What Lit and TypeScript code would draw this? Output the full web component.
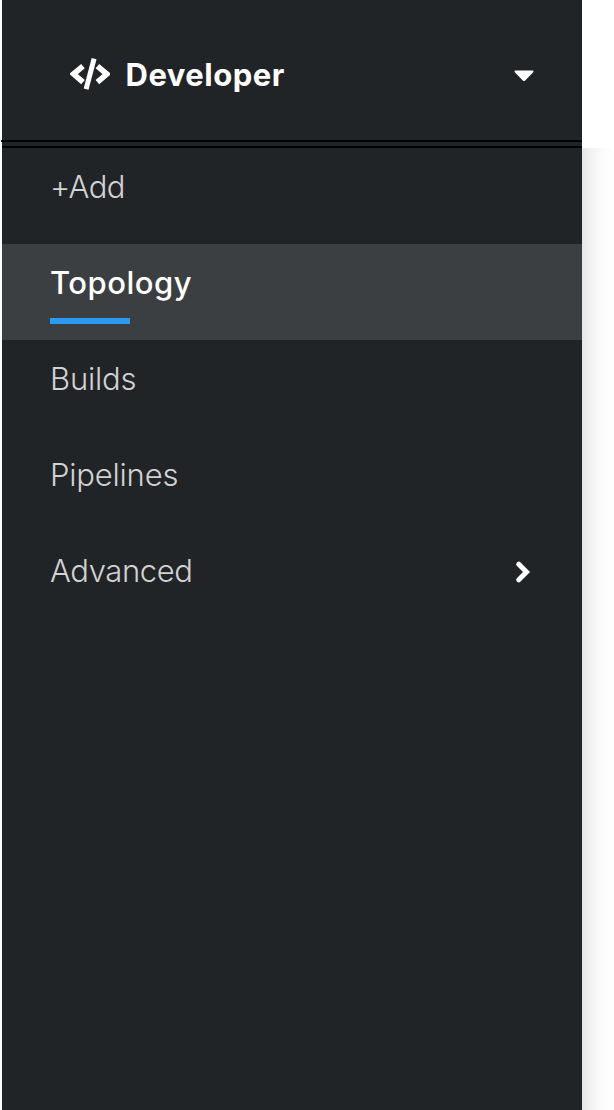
import { LitElement, html, css, nothing } from "lit";
import { customElement, property } from "lit/decorators.js";
import { classMap } from "lit/directives/class-map.js";

interface NavItem {
  id: string;
  label: string;
  current?: boolean;
  expandable?: boolean;
}

const ITEMS: NavItem[] = [
  { id: "add", label: "+Add" },
  { id: "topology", label: "Topology", current: true },
  { id: "builds", label: "Builds" },
  { id: "pipelines", label: "Pipelines" },
  { id: "advanced", label: "Advanced", expandable: true },
];

@customElement("perspective-switcher")
class PerspectiveSwitcher extends LitElement {
  @property() label = "";

  static styles = css`
    :host {
      display: block;
      height: 140px;
    }
    .toggle {
      box-sizing: border-box;
      display: flex;
      align-items: center;
      width: 100%;
      height: 100%;
      padding: 8px 48px 0 69px;
      border: 0;
      background: none;
      color: #fff;
      font: 650 31px/48px Inter, sans-serif;
      letter-spacing: 0.5px;
      text-align: left;
    }
    .code {
      flex: none;
      width: 40px;
      height: 34px;
      margin-right: 15.5px;
    }
    .label {
      flex: 1;
      padding-top: 2px;
    }
    .caret {
      flex: none;
      width: 20px;
      height: 12px;
      margin-top: 3px;
    }
  `;

  render() {
    return html`<button class="toggle">
      <svg class="code" viewBox="0 0 40 34" fill="none" stroke="#fff">
        <path d="M24.1 1.6 16.1 32.2" stroke-width="5" />
        <path d="M13 9.2 3.6 17 13 25.1M27.4 9.2 36.8 17 27.4 25.1" stroke-width="5.6" />
      </svg>
      <span class="label">${this.label}</span>
      <svg class="caret" viewBox="0 0 20 12" fill="#fff">
        <path d="M1.6 .5H18.4Q20.2 .9 19 2.4L11.2 10.4Q10 11.5 8.8 10.4L1 2.4Q-.2 .9 1.6 .5Z" />
      </svg>
    </button>`;
  }
}

@customElement("app-root")
class AppRoot extends LitElement {
  static styles = css`
    :host {
      display: grid;
      grid-template-columns: 581px 1fr;
      height: 1110px;
      padding-left: 1px;
      box-sizing: border-box;
      background: #fff;
      overflow: hidden;
    }
    .sidebar {
      display: flex;
      flex-direction: column;
      background: linear-gradient(90deg, #fff 1px, #212427 1px);
    }
    .rule {
      height: 2px;
      background: #030303;
    }
    .rule.inner {
      margin: 4px 0 0 1px;
    }
    .nav {
      margin: 0 0 0 1px;
      padding: 0;
      list-style: none;
    }
    .item {
      box-sizing: border-box;
      display: flex;
      align-items: center;
      justify-content: space-between;
      height: 96px;
      padding: 0 52px 0 48px;
      color: #d2d2d2;
      font: 300 31px/48px Inter, sans-serif;
    }
    .text {
      display: flex;
      flex-direction: column;
      height: 48px;
      margin-top: -18px;
    }
    .add {
      letter-spacing: -0.6px;
    }
    .builds,
    .pipelines {
      letter-spacing: -0.2px;
    }
    .advanced {
      letter-spacing: -0.4px;
    }
    .current {
      background: #3c3f42;
      color: #fff;
      font-weight: 500;
      letter-spacing: 0.5px;
    }
    .current .text::after {
      content: "";
      flex: none;
      width: 80px;
      height: 6px;
      margin-top: 11px;
      background: #2b9af3;
    }
    .chevron {
      width: 14px;
      height: 22px;
      margin-top: -16px;
    }
    .content {
      margin-top: 148px;
      background: linear-gradient(90deg, #e6e6e6, #f1f1f1 25%, #fafafa 60%, #fff);
    }
  `;

  render() {
    return html`
      <aside class="sidebar">
        <perspective-switcher label="Developer"></perspective-switcher>
        <div class="rule"></div>
        <div class="rule inner"></div>
        <ul class="nav">
          ${ITEMS.map(
            (item) => html`<li class=${classMap({ item: true, [item.id]: true, current: !!item.current })}>
              <span class="text">${item.label}</span>
              ${item.expandable
                ? html`<svg class="chevron" viewBox="0 0 14 22" fill="none" stroke="#fff" stroke-width="5">
                    <path d="M2.8 3.2 10.5 11 2.8 18.8" stroke-linecap="round" />
                  </svg>`
                : nothing}
            </li>`
          )}
        </ul>
      </aside>
      <main class="content"></main>
    `;
  }
}
